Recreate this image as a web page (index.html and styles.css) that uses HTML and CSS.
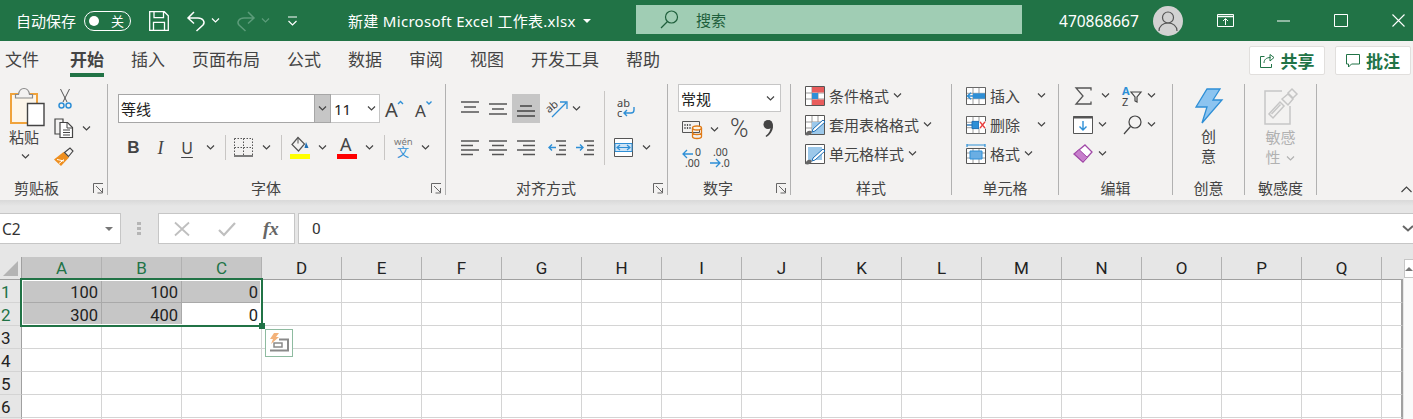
FILE: index.html
```html
<!DOCTYPE html>
<html lang="zh-CN">
<head>
  <meta charset="UTF-8" />
  <title>新建 Microsoft Excel 工作表.xlsx - Excel</title>
  <link rel="stylesheet" href="styles.css">
</head>
<body>

  <svg class="defs" aria-hidden="true">
    <symbol id="chev" viewBox="0 0 9 5"><path d="M1 .5 4.500 4 8 .5" fill="none" stroke="#444" stroke-width="1.200"/></symbol>
    <symbol id="chev-w" viewBox="0 0 9 5"><path d="M1 .5 4.500 4 8 .5" fill="none" stroke="#fff" stroke-width="1.200"/></symbol>
    <symbol id="chev-f" viewBox="0 0 9 5"><path d="M1 .5 4.500 4 8 .5" fill="none" stroke="#5c9c7a" stroke-width="1.200"/></symbol>
    <symbol id="chev-g" viewBox="0 0 9 5"><path d="M1 .5 4.500 4 8 .5" fill="none" stroke="#b1b1b1" stroke-width="1.200"/></symbol>
    <symbol id="launch" viewBox="0 0 11 11"><path d="M.5 10V.5H10M3 3l6 6M9.500 5v5h-5" fill="none" stroke="#666"/></symbol>
    <symbol id="lines-top" viewBox="0 0 18 17"><path d="M0 2h18M3 7h12M0 12h18" stroke="#555" stroke-width="1.400"/></symbol>
    <symbol id="lines-mid" viewBox="0 0 18 17"><path d="M0 4h18M3 9h12M0 14h18" stroke="#555" stroke-width="1.400"/></symbol>
    <symbol id="lines-bot" viewBox="0 0 18 17"><path d="M3 6h12M0 11h18M0 16h18" stroke="#444" stroke-width="1.400"/></symbol>
    <symbol id="grid20" viewBox="0 0 20 20"><path d="M.5.500h19v19H.5z" fill="#fff" stroke="#555"/><path d="M7 1v18M13 1v18M1 7h18M1 13h18" stroke="#999"/></symbol>
  </svg>

  <header class="titlebar">
    <span class="autosave">自动保存</span>
    <span class="toggle"><i class="toggle-dot"></i><span>关</span></span>
    <svg class="ic ml-18" width="20" height="20" viewBox="0 0 20 20" fill="none" stroke="#fff" stroke-width="1.300"><path d="M.7.7h14.600l4 4v14.600H.7zM5 .7v6h9.500v-6M4.500 19.300v-8h11v8"/></svg>
    <svg class="ic ml-17" width="20" height="22" viewBox="0 0 20 22" fill="none" stroke="#fff" stroke-width="1.500"><path d="M8 2 2 8l6 5.500M2 8h10c5 0 7.500 4 5 7l-6.500 6"/></svg>
    <svg class="chev ml-5"><use href="#chev-w"/></svg>
    <svg class="ic ml-16" width="20" height="22" viewBox="0 0 20 22" fill="none" stroke="#5c9c7a" stroke-width="1.500"><path d="M12 2l6 6-6 5.500M18 8H8c-5 0-7.500 4-5 7l6.500 6"/></svg>
    <svg class="chev ml-5"><use href="#chev-f"/></svg>
    <svg class="ic ml-17" width="11" height="10" viewBox="0 0 11 10" fill="none" stroke="#fff" stroke-width="1.200"><path d="M1 1h9M1.500 5 5.500 9l4-4"/></svg>
    <span class="doc-name">新建 Microsoft Excel 工作表.xlsx</span>
    <i class="doc-caret"></i>
    <div class="search">
      <svg class="ic" width="19" height="19" viewBox="0 0 19 19" fill="none" stroke="#1f5f3c" stroke-width="1.200"><circle cx="11.500" cy="7" r="6"/><path d="M7.500 11.500 1 18"/></svg>
      <span>搜索</span>
    </div>
    <span class="account">470868667</span>
    <span class="avatar">
      <svg width="20" height="22" viewBox="0 0 20 22" fill="none" stroke="#555" stroke-width="1.200"><circle cx="10" cy="7.500" r="5.500"/><path d="M1 21c0-5 4-8 9-8s9 3 9 8"/></svg>
    </span>
    <svg class="ic ml-34" width="17" height="13" viewBox="0 0 17 13" fill="none" stroke="#fff"><path d="M.5.500h16v12H.5z"/><path d="M.5 2.500h16" stroke-width="1.500"/><path d="M8.500 11V5M6 7l2.500-2.500L11 7"/></svg>
    <svg class="ic ml-43" width="13" height="2" viewBox="0 0 13 2"><path d="M0 1h13" stroke="#fff"/></svg>
    <svg class="ic ml-44" width="14" height="13" viewBox="0 0 14 13"><path d="M.5.500h13v12H.5z" fill="none" stroke="#fff"/></svg>
    <svg class="ic ml-44" width="13" height="13" viewBox="0 0 13 13"><path d="M.5.500l12 12M12.500.500l-12 12" stroke="#fff" stroke-width="1.100"/></svg>
  </header>

  <nav class="tabs">
    <span class="tab">文件</span>
    <span class="tab tab-active">开始</span>
    <span class="tab">插入</span>
    <span class="tab">页面布局</span>
    <span class="tab">公式</span>
    <span class="tab">数据</span>
    <span class="tab">审阅</span>
    <span class="tab">视图</span>
    <span class="tab">开发工具</span>
    <span class="tab">帮助</span>
    <button class="top-btn top-btn-first">
      <svg width="15" height="15" viewBox="0 0 15 15" fill="none" stroke="#217346"><path d="M4.500 3.500H.5v11h11V11M4 10c0-3.500 2.500-5.500 6.500-5.500M10 1.500l4 3-4 3.500z"/></svg>
      共享
    </button>
    <button class="top-btn">
      <svg width="14" height="14" viewBox="0 0 14 14" fill="none" stroke="#217346"><path d="M.5.500h13v9.500H5.500l-3 3v-3h-2z"/></svg>
      批注
    </button>
  </nav>

  <section class="ribbon">

    <div class="group g-clip">
      <div class="group-body">
        <div class="paste">
          <svg class="ic" width="36" height="39" viewBox="0 0 36 39">
            <path d="M2 7h26v29H2z" fill="#fdf6ea" stroke="#f0a33c" stroke-width="2"/>
            <path d="M6.500 11V7.500h3C10 4 11 1.500 15 1.500S20 4 20.500 7.500h3V11z" fill="#f3f2f1" stroke="#8a8a8a" stroke-width="1.200"/>
            <path d="M18.500 16.500h16.500v22H18.500z" fill="#fff" stroke="#444" stroke-width="1.400"/>
          </svg>
          <span class="paste-label">粘贴</span>
          <svg class="chev"><use href="#chev"/></svg>
        </div>
        <div class="clip-tools">
          <svg class="ic ml-4" width="14" height="21" viewBox="0 0 14 21" fill="none"><path d="M2.500 1 9 14M11.500 1 5 14" stroke="#555"/><circle cx="3.500" cy="17.500" r="2.500" stroke="#2e8fd6" stroke-width="1.500"/><circle cx="10.500" cy="17.500" r="2.500" stroke="#2e8fd6" stroke-width="1.500"/></svg>
          <div class="tool-row">
            <svg class="ic" width="20" height="20" viewBox="0 0 20 20" fill="none" stroke="#444" stroke-width="1.200"><path d="M7 16H1V1h8v3"/><path d="M6 4.500h7.500l5 5v10H6z" fill="#fff"/><path d="M13 5v5h5M9 12h7M9 14.500h7M9 17h7" stroke-width="1"/></svg>
            <svg class="chev ml-8"><use href="#chev"/></svg>
          </div>
          <svg class="ic" width="20" height="20" viewBox="0 0 20 20"><path d="M9.500 5 15 10.500 7 19 0 12.500z" fill="#ee8f1f"/><path d="M3 12.500l7 1.500M5 16.500l5-4" stroke="#fff"/><path d="M10.500 5.500 16 1l3 3-4.500 5.500z" fill="#f3f2f1" stroke="#444" stroke-width="1.100"/></svg>
        </div>
      </div>
      <div class="group-label">
        <span class="label-text">剪贴板</span>
        <svg class="launch"><use href="#launch"/></svg>
      </div>
    </div>

    <div class="group g-font">
      <div class="group-body font-body">
        <div class="font-row1">
          <div class="combo font-name">
            <span>等线</span>
            <span class="combo-btn"><svg class="chev"><use href="#chev"/></svg></span>
          </div>
          <div class="combo font-size">
            <span>11</span>
            <svg class="chev"><use href="#chev"/></svg>
          </div>
          <svg class="ic ml-5" width="20" height="20" viewBox="0 0 20 20"><text class="svg-a" x="0" y="18" font-size="20">A</text><path d="M13 5l2.500-2.500L18 5" fill="none" stroke="#2e8fd6" stroke-width="1.400"/></svg>
          <svg class="ic ml-10" width="18" height="20" viewBox="0 0 18 20"><text class="svg-a" x="0" y="18" font-size="17">A</text><path d="M11.500 2.500 14 5l2.500-2.500" fill="none" stroke="#2e8fd6" stroke-width="1.400"/></svg>
        </div>
        <div class="font-row2">
          <span class="fmt fmt-b">B</span>
          <span class="fmt fmt-i">I</span>
          <span class="fmt fmt-u">U</span>
          <svg class="chev ml-6"><use href="#chev"/></svg>
          <i class="mini-sep ml-10"></i>
          <svg class="ic ml-8" width="19" height="19" viewBox="0 0 19 19" fill="none" stroke="#555"><path d="M.5.500h18M.5 9.500h18M9.500.500v17M.5.500v17M18.500.500v17" stroke-dasharray="1.500 1.500"/><path d="M0 18h19" stroke-width="1.500"/></svg>
          <svg class="chev ml-9"><use href="#chev"/></svg>
          <i class="mini-sep ml-10"></i>
          <svg class="ic ml-8" width="20" height="23" viewBox="0 0 20 23"><path d="M8 1.500 2 8.500 8.500 15l6-7z" fill="none" stroke="#555" stroke-width="1.200"/><path d="M8 1.500v6" stroke="#555"/><path d="M16 6l2.500 6h-4z" fill="#1f6fb5"/><path d="M0 18h20v5H0z" fill="#ff0"/></svg>
          <svg class="chev ml-8"><use href="#chev"/></svg>
          <svg class="ic ml-10" width="20" height="23" viewBox="0 0 20 23"><text class="svg-a" x="3" y="15" font-size="18">A</text><path d="M0 18h20v5H0z" fill="#f00"/></svg>
          <svg class="chev ml-8"><use href="#chev"/></svg>
          <i class="mini-sep ml-10"></i>
          <svg class="ic ml-9" width="18" height="22" viewBox="0 0 18 22"><text class="svg-wen" x="0" y="8" font-size="9.500">wén</text><text class="svg-blue" x="3" y="20" font-size="12">文</text></svg>
          <svg class="chev ml-9"><use href="#chev"/></svg>
        </div>
      </div>
      <div class="group-label">
        <span class="label-text">字体</span>
        <svg class="launch"><use href="#launch"/></svg>
      </div>
    </div>

    <div class="group g-align">
      <div class="group-body align-body">
        <div class="align-left">
          <div class="align-row">
            <svg class="ic-18"><use href="#lines-top"/></svg>
            <svg class="ic-18 ml-10"><use href="#lines-mid"/></svg>
            <span class="pressed"><svg class="ic-18"><use href="#lines-bot"/></svg></span>
            <svg class="ic ml-7" width="21" height="20" viewBox="0 0 21 20" fill="none"><text class="svg-a" x="0" y="11" font-size="11" transform="rotate(-40 6 10)">ab</text><path d="M5 18 19 4M13 3h7v7" stroke="#2e8fd6" stroke-width="1.300"/></svg>
            <svg class="chev ml-4"><use href="#chev"/></svg>
          </div>
          <div class="align-row align-row2">
            <svg class="ic" width="18" height="17" viewBox="0 0 18 17" stroke="#555" stroke-width="1.400"><path d="M0 2h18M0 6.500h12M0 11h18M0 15.500h12"/></svg>
            <svg class="ic ml-10" width="18" height="17" viewBox="0 0 18 17" stroke="#555" stroke-width="1.400"><path d="M0 2h18M3 6.500h12M0 11h18M3 15.500h12"/></svg>
            <svg class="ic ml-10" width="18" height="17" viewBox="0 0 18 17" stroke="#555" stroke-width="1.400"><path d="M0 2h18M6 6.500h12M0 11h18M6 15.500h12"/></svg>
            <svg class="ic ml-13" width="18" height="17" viewBox="0 0 18 17" fill="none"><path d="M8 2h10M11 6.500h7M11 11h7M8 15.500h10" stroke="#555" stroke-width="1.400"/><path d="M8 8.500H1M4 5.500l-3 3 3 3" stroke="#2e8fd6" stroke-width="1.400"/></svg>
            <svg class="ic ml-10" width="18" height="17" viewBox="0 0 18 17" fill="none"><path d="M8 2h10M11 6.500h7M11 11h7M8 15.500h10" stroke="#555" stroke-width="1.400"/><path d="M0 8.500h7M4 5.500l3 3-3 3" stroke="#2e8fd6" stroke-width="1.400"/></svg>
          </div>
        </div>
        <i class="tall-sep"></i>
        <div class="align-right">
          <svg class="ic wrap-ic" width="19" height="21" viewBox="0 0 19 21" fill="none"><text class="svg-a" x="0" y="9" font-size="11">ab</text><text class="svg-a" x="0" y="19" font-size="11">c</text><path d="M17 9v3c0 2-1 3-3 3H7M10 12l-3 3 3 3" stroke="#2e8fd6" stroke-width="1.400"/></svg>
          <div class="tool-row merge-row">
            <svg class="ic" width="19" height="19" viewBox="0 0 19 19"><path d="M.5.500h18v18H.5z" fill="#fff" stroke="#555"/><path d="M1 5.500h17v8H1z" fill="#cfe4f5" stroke="#2e8fd6"/><path d="M3 9.500h13M6 7 3 9.500 6 12M13 7l3 2.500-3 2.500" fill="none" stroke="#2e8fd6" stroke-width="1.200"/></svg>
            <svg class="chev ml-9"><use href="#chev"/></svg>
          </div>
        </div>
      </div>
      <div class="group-label">
        <span class="label-text">对齐方式</span>
        <svg class="launch"><use href="#launch"/></svg>
      </div>
    </div>

    <div class="group g-num">
      <div class="group-body num-body">
        <div class="combo num-format">
          <span>常规</span>
          <svg class="chev"><use href="#chev"/></svg>
        </div>
        <div class="num-row">
          <svg class="ic ml-4" width="20" height="19" viewBox="0 0 20 19" fill="none"><path d="M.5 1.500h17v11H.5z" stroke="#555"/><path d="M3 4v6M5.500 4v6M8 4v6" stroke="#555" stroke-width="1.200" stroke-dasharray="2 1"/><ellipse cx="15" cy="8" rx="4.500" ry="2" fill="#fdf3e2" stroke="#e07b18" stroke-width="1.300"/><path d="M10.500 8v8.500c0 1 2 2 4.500 2s4.500-1 4.500-2V8M10.500 12.500c0 1 2 2 4.500 2s4.500-1 4.500-2" fill="none" stroke="#e07b18" stroke-width="1.300"/></svg>
          <svg class="chev ml-8"><use href="#chev"/></svg>
          <span class="percent">%</span>
          <svg class="ic ml-13" width="11" height="20" viewBox="0 0 11 20"><circle cx="5" cy="5.500" r="4.500" fill="#444"/><path d="M6 1c6 2 5.500 12-2.500 17l-1-1c4-3 5-6 5-9z" fill="#444"/></svg>
        </div>
        <div class="num-row num-row3">
          <svg class="ic ml-4" width="20" height="20" viewBox="0 0 20 20" fill="none"><path d="M11 6H1M5 2 1 6l4 4" stroke="#2e8fd6" stroke-width="1.300"/><text class="svg-a" x="13" y="8" font-size="10.500">0</text><text class="svg-a" x="3" y="19" font-size="10.500">.00</text></svg>
          <svg class="ic ml-7" width="20" height="20" viewBox="0 0 20 20" fill="none"><text class="svg-a" x="4" y="8" font-size="10.500">.00</text><path d="M1 15h10M7 11l4 4-4 4" stroke="#2e8fd6" stroke-width="1.300"/><text class="svg-a" x="12" y="19" font-size="10.500">.0</text></svg>
        </div>
      </div>
      <div class="group-label">
        <span class="label-text">数字</span>
        <svg class="launch"><use href="#launch"/></svg>
      </div>
    </div>

    <div class="group g-style">
      <div class="group-body list-body">
        <div class="list-row">
          <svg class="ic" width="20" height="20" viewBox="0 0 20 20"><use href="#grid20"/><path d="M7 1h12v5.500H7zM7 13.500h12V19H7z" fill="#e85c5c"/><path d="M7 7h6v6H7z" fill="#2e8fd6"/></svg>
          <span>条件格式</span><svg class="chev"><use href="#chev"/></svg>
        </div>
        <div class="list-row">
          <svg class="ic" width="20" height="20" viewBox="0 0 20 20"><use href="#grid20"/><path d="M7 7h12v12H7z" fill="#9cc8ea"/><path d="M18 5 8 14l-1 3 3-1 10-9z" fill="#fff" stroke="#1f6fb5"/><path d="M0 20c1-3 3-5 6-4l1 1c-1 3-4 4-7 3z" fill="#666"/></svg>
          <span>套用表格格式</span><svg class="chev"><use href="#chev"/></svg>
        </div>
        <div class="list-row">
          <svg class="ic" width="20" height="20" viewBox="0 0 20 20"><path d="M.5.500h19v19H.5z" fill="#fff" stroke="#555"/><path d="M3 3h14v13H3z" fill="#9cc8ea"/><path d="M18 5 8 14l-1 3 3-1 10-9z" fill="#fff" stroke="#1f6fb5"/><path d="M0 20c1-3 3-5 6-4l1 1c-1 3-4 4-7 3z" fill="#666"/></svg>
          <span>单元格样式</span><svg class="chev"><use href="#chev"/></svg>
        </div>
      </div>
      <div class="group-label"><span class="label-text">样式</span></div>
    </div>

    <div class="group g-cells">
      <div class="group-body list-body">
        <div class="list-row">
          <svg class="ic" width="20" height="18" viewBox="0 0 20 20" preserveAspectRatio="none"><use href="#grid20"/><path d="M7 7h12v6H7z" fill="#2e8fd6"/><path d="M11 10H2M5 6.500 1.500 10 5 13.500" fill="none" stroke="#2e8fd6" stroke-width="1.500"/></svg>
          <span>插入</span><svg class="chev cell-chev"><use href="#chev"/></svg>
        </div>
        <div class="list-row">
          <svg class="ic" width="20" height="18" viewBox="0 0 20 20" preserveAspectRatio="none"><use href="#grid20"/><path d="M6 6h7v8H6z" fill="#2e8fd6" stroke="#1f6fb5"/><path d="M1 10h5" stroke="#1f6fb5" stroke-width="1.500"/><path d="M13 6h7v8h-7z" fill="#fff"/><path d="M14 6.500l5 7M19 6.500l-5 7" stroke="#e83c3c" stroke-width="1.500"/></svg>
          <span>删除</span><svg class="chev cell-chev"><use href="#chev"/></svg>
        </div>
        <div class="list-row">
          <svg class="ic" width="20" height="20" viewBox="0 0 20 20"><path d="M1 1h18M1 0v3M19 0v3" stroke="#2e8fd6" stroke-width="1.200"/><path d="M.5 4.500h19v15H.5z" fill="#fff" stroke="#555"/><path d="M7 5v14M13 5v14M1 9h18M1 14h18" stroke="#999"/><path d="M4 7h12v8H4z" fill="#6aaee3" stroke="#2e8fd6"/></svg>
          <span>格式</span><svg class="chev"><use href="#chev"/></svg>
        </div>
      </div>
      <div class="group-label"><span class="label-text">单元格</span></div>
    </div>

    <div class="group g-edit">
      <div class="group-body list-body">
        <div class="list-row edit-row">
          <svg class="ic" width="20" height="18" viewBox="0 0 20 18" fill="none"><path d="M18 3.500V1H3l7 8-7 8h15v-2.500" stroke="#555" stroke-width="1.300"/></svg>
          <svg class="chev ml-8"><use href="#chev"/></svg>
          <svg class="ic ml-12" width="20" height="22" viewBox="0 0 20 22"><text class="svg-sort-a" x="0" y="10" font-size="11">A</text><text class="svg-a" x="0" y="21" font-size="11">Z</text><path d="M9 7h10l-4 5v5l-2-1v-4z" fill="none" stroke="#444" stroke-width="1.200"/></svg>
          <svg class="chev ml-5"><use href="#chev"/></svg>
        </div>
        <div class="list-row edit-row">
          <svg class="ic" width="20" height="18" viewBox="0 0 20 18"><path d="M.5.500h19v17H.5z" fill="#fff" stroke="#555"/><path d="M0 1.500h20" stroke="#555" stroke-width="2"/><path d="M10 5v9M6.500 10.500l3.500 3.500 3.500-3.500" fill="none" stroke="#2e8fd6" stroke-width="1.400"/></svg>
          <svg class="chev ml-5"><use href="#chev"/></svg>
          <svg class="ic ml-16" width="19" height="20" viewBox="0 0 19 20" fill="none" stroke="#444" stroke-width="1.200"><circle cx="12" cy="7" r="6"/><path d="M7.500 11.500 1 19"/></svg>
          <svg class="chev ml-5"><use href="#chev"/></svg>
        </div>
        <div class="list-row edit-row">
          <svg class="ic" width="20" height="20" viewBox="0 0 20 20"><path d="M12 1 19 8 10 18 1 10z" fill="#fff" stroke="#a14aa8" stroke-width="1.300"/><path d="M6 5.500l8.500 8L10 18l-8.500-8z" fill="#c77fcc" stroke="#a14aa8"/></svg>
          <svg class="chev ml-5"><use href="#chev"/></svg>
        </div>
      </div>
      <div class="group-label"><span class="label-text">编辑</span></div>
    </div>

    <div class="group g-ideas">
      <div class="group-body big-body">
        <svg class="ic" width="28" height="36" viewBox="0 0 28 36"><path d="M12 1h13l-7 11h9L7 35l5-16H1z" fill="#8cc4f0" stroke="#2e8fd6" stroke-width="1.300"/></svg>
        <span class="big-text">创<br>意</span>
      </div>
      <div class="group-label"><span class="label-text">创意</span></div>
    </div>

    <div class="group g-sens">
      <div class="group-body big-body">
        <svg class="ic" width="34" height="38" viewBox="0 0 34 38" fill="none" stroke="#c6c6c6" stroke-width="1.500"><path d="M26 18v18H1V3h17"/><path d="M5 26 16 14l4 4-11 12z"/><path d="M7.500 26 16.500 16.500"/><path d="M18 11l6-5 5 5-5 6z" fill="#f3f2f1"/><path d="M24 5l4-4 5 5-4 4z"/></svg>
        <span class="big-text sens-text">敏感<br>性<svg class="chev"><use href="#chev-g"/></svg></span>
      </div>
      <div class="group-label"><span class="label-text">敏感度</span></div>
    </div>

    <svg class="collapse" width="11" height="7" viewBox="0 0 11 7"><path d="M.5 6 5.500 1l5 5" fill="none" stroke="#444" stroke-width="1.200"/></svg>
  </section>

  <section class="formula-band">
    <div class="name-box">
      <span>C2</span>
      <i class="name-caret"></i>
    </div>
    <svg class="grip" width="4" height="13" viewBox="0 0 4 13"><path d="M0 0h4v3H0zM0 5h4v3H0zM0 10h4v3H0z" fill="#b5b5b5"/></svg>
    <div class="fx-btns">
      <svg class="ic" width="16" height="14" viewBox="0 0 16 14"><path d="M1 .5l14 13M15 .5l-14 13" stroke="#bfbfbf" stroke-width="1.800"/></svg>
      <svg class="ic" width="18" height="14" viewBox="0 0 18 14"><path d="M1 8l5 5L17 1" fill="none" stroke="#bfbfbf" stroke-width="2.200"/></svg>
      <span class="fx">fx</span>
    </div>
    <div class="formula-input">
      <span>0</span>
      <svg class="formula-chev" width="12" height="7" viewBox="0 0 12 7"><path d="M1 1l5 4.500L11 1" fill="none" stroke="#666" stroke-width="2"/></svg>
    </div>
  </section>

  <section class="sheet">
    <div class="grid">
      <div class="corner"><i></i></div>
      <div class="col sel">A</div><div class="col sel">B</div><div class="col sel">C</div>
      <div class="col">D</div><div class="col">E</div><div class="col">F</div><div class="col">G</div>
      <div class="col">H</div><div class="col">I</div><div class="col">J</div><div class="col">K</div>
      <div class="col">L</div><div class="col">M</div><div class="col">N</div><div class="col">O</div>
      <div class="col">P</div><div class="col">Q</div><div class="col col-end"></div>

      <div class="row row-sel">1</div>
      <div class="c filled">100</div><div class="c filled">100</div><div class="c filled">0</div>
      <div class="c"></div><div class="c"></div><div class="c"></div><div class="c"></div><div class="c"></div><div class="c"></div><div class="c"></div><div class="c"></div><div class="c"></div><div class="c"></div><div class="c"></div><div class="c"></div><div class="c"></div><div class="c"></div><div class="c c-end"></div>

      <div class="row row-sel">2</div>
      <div class="c filled">300</div><div class="c filled">400</div><div class="c">0</div>
      <div class="c"></div><div class="c"></div><div class="c"></div><div class="c"></div><div class="c"></div><div class="c"></div><div class="c"></div><div class="c"></div><div class="c"></div><div class="c"></div><div class="c"></div><div class="c"></div><div class="c"></div><div class="c"></div><div class="c c-end"></div>

      <div class="row">3</div>
      <div class="c"></div><div class="c"></div><div class="c"></div><div class="c"></div><div class="c"></div><div class="c"></div><div class="c"></div><div class="c"></div><div class="c"></div><div class="c"></div><div class="c"></div><div class="c"></div><div class="c"></div><div class="c"></div><div class="c"></div><div class="c"></div><div class="c"></div><div class="c c-end"></div>

      <div class="row">4</div>
      <div class="c"></div><div class="c"></div><div class="c"></div><div class="c"></div><div class="c"></div><div class="c"></div><div class="c"></div><div class="c"></div><div class="c"></div><div class="c"></div><div class="c"></div><div class="c"></div><div class="c"></div><div class="c"></div><div class="c"></div><div class="c"></div><div class="c"></div><div class="c c-end"></div>

      <div class="row">5</div>
      <div class="c"></div><div class="c"></div><div class="c"></div><div class="c"></div><div class="c"></div><div class="c"></div><div class="c"></div><div class="c"></div><div class="c"></div><div class="c"></div><div class="c"></div><div class="c"></div><div class="c"></div><div class="c"></div><div class="c"></div><div class="c"></div><div class="c"></div><div class="c c-end"></div>

      <div class="row">6</div>
      <div class="c"></div><div class="c"></div><div class="c"></div><div class="c"></div><div class="c"></div><div class="c"></div><div class="c"></div><div class="c"></div><div class="c"></div><div class="c"></div><div class="c"></div><div class="c"></div><div class="c"></div><div class="c"></div><div class="c"></div><div class="c"></div><div class="c"></div><div class="c c-end"></div>

      <div class="row"></div>
      <div class="c"></div><div class="c"></div><div class="c"></div><div class="c"></div><div class="c"></div><div class="c"></div><div class="c"></div><div class="c"></div><div class="c"></div><div class="c"></div><div class="c"></div><div class="c"></div><div class="c"></div><div class="c"></div><div class="c"></div><div class="c"></div><div class="c"></div><div class="c c-end"></div>

      <div class="selection"><i class="handle"></i></div>
      <div class="quick">
        <svg width="20" height="20" viewBox="0 0 20 20"><path d="M1 17.500h18V6.500h-9" fill="none" stroke="#8a8a8a" stroke-width="2"/><path d="M5 14V10h8v4z" fill="none" stroke="#8a8a8a" stroke-width="1.500"/><path d="M5 0h5L7 4h3L2 11l2-5H1z" fill="#f3b27a"/></svg>
      </div>
    </div>
    <div class="scroll">
      <div class="scroll-up"><i></i></div>
    </div>
  </section>

</body>
</html>
```

FILE: styles.css
```css
* {
  box-sizing: border-box;
}
html, body {
  margin: 0;
  height: 419px;
  overflow: hidden;
}
body {
  width: 1413px;
  font-family: "Noto Sans", "Noto Sans CJK SC", sans-serif;
  font-size: 15px;
  color: #444;
  background: #e6e6e6;
}
.defs {
  position: absolute;
  width: 0;
  height: 0;
}
.ic, .ic-18, .chev, .launch {
  display: block;
  flex: none;
  overflow: visible;
}
.ic-18 {
  width: 18px;
  height: 17px;
}
.chev {
  width: 9px;
  height: 5px;
}
.ml-4 { margin-left: 4px; }
.ml-5 { margin-left: 5px; }
.ml-6 { margin-left: 6px; }
.ml-7 { margin-left: 7px; }
.ml-8 { margin-left: 8px; }
.ml-9 { margin-left: 9px; }
.ml-10 { margin-left: 10px; }
.ml-12 { margin-left: 12px; }
.ml-13 { margin-left: 13px; }
.ml-16 { margin-left: 16px; }
.ml-17 { margin-left: 17px; }
.ml-18 { margin-left: 18px; }
.ml-34 { margin-left: 34px; }
.ml-43 { margin-left: 43px; }
.ml-44 { margin-left: 44px; }

/* title bar */
.titlebar {
  display: flex;
  align-items: center;
  height: 41px;
  padding-left: 16px;
  background: #217346;
  color: #fff;
}
.autosave {
  line-height: 20px;
}
.toggle {
  display: flex;
  align-items: center;
  justify-content: space-between;
  width: 47px;
  height: 20px;
  margin-left: 8px;
  padding: 0 6px 0 4px;
  border: 1px solid #fff;
  border-radius: 10px;
  font-size: 13px;
}
.toggle-dot {
  width: 10px;
  height: 10px;
  border-radius: 50%;
  background: #fff;
}
.doc-name {
  width: 226px;
  margin-left: 50px;
  letter-spacing: .3px;
  white-space: nowrap;
}
.doc-caret {
  margin-left: 9px;
  border: 4px solid transparent;
  border-top: 4px solid #fff;
  border-bottom: 0;
}
.search {
  display: flex;
  align-items: center;
  gap: 17px;
  width: 386px;
  height: 29px;
  margin: -2px 0 0 45px;
  padding-left: 24px;
  background: #a0cdb4;
  color: #1f5f3c;
}
.account {
  margin-left: 37px;
  width: 81px;
  font-size: 15.500px;
}
.avatar {
  display: flex;
  align-items: flex-end;
  justify-content: center;
  width: 30px;
  height: 30px;
  margin-left: 13px;
  padding-bottom: 4px;
  border-radius: 50%;
  background: #d2d2d2;
}

/* tabs */
.tabs {
  display: flex;
  align-items: flex-start;
  gap: 27px;
  height: 43px;
  padding-left: 5px;
  background: #f3f2f1;
}
.tab {
  height: 36px;
  padding-top: 5px;
  border-bottom: 4px solid transparent;
  font-size: 17px;
  line-height: 27px;
  white-space: nowrap;
}
.tab-active {
  margin-left: 4px;
  border-bottom-color: #217346;
  font-weight: 700;
}
.top-btn {
  display: flex;
  align-items: center;
  justify-content: center;
  gap: 6px;
  width: 76px;
  height: 29px;
  margin: 5px 0 0 -17px;
  padding: 0;
  border: 1px solid #e1dfdd;
  border-radius: 2px;
  background: #fff;
  color: #217346;
  font-family: inherit;
  font-size: 17px;
  font-weight: 700;
}
.top-btn-first {
  margin-left: auto;
}
.top-btn:last-child {
  margin-right: 2px;
}

/* ribbon */
.ribbon {
  display: flex;
  height: 116px;
  padding-bottom: 5px;
  background: #f3f2f1;
}
.group {
  display: flex;
  flex: none;
  flex-direction: column;
  border-right: 1px solid #b1b1b1;
}
.g-clip { width: 108px; }
.g-font { width: 338px; }
.g-align { width: 222px; }
.g-num { width: 123px; }
.g-style { width: 161px; }
.g-cells { width: 107px; }
.g-edit { width: 114px; }
.g-ideas { width: 72px; }
.g-sens { width: 72px; }
.group-body {
  flex: 1;
  min-height: 0;
}
.group-label {
  display: flex;
  align-items: center;
  justify-content: center;
  height: 20px;
  margin-bottom: -3px;
  line-height: 20px;
  white-space: nowrap;
}
.launch {
  width: 11px;
  height: 11px;
  margin-right: 3px;
}
.g-clip .label-text { margin-right: auto; margin-left: 14px; }
.g-font .label-text { margin-right: auto; margin-left: 143px; }
.g-align .label-text { margin-right: auto; margin-left: 70px; }
.g-num .label-text { margin-right: auto; margin-left: 35px; }

.tool-row {
  display: flex;
  align-items: center;
}

/* clipboard */
.g-clip .group-body {
  display: flex;
  padding-left: 9px;
}
.paste {
  display: flex;
  flex-direction: column;
  align-items: center;
  width: 36px;
  padding-top: 3px;
}
.paste-label {
  width: 32px;
  margin: 1px 0 0 -4px;
  line-height: 20px;
  white-space: nowrap;
}
.paste .chev {
  margin: 7px 0 0 -4px;
}
.clip-tools {
  display: flex;
  flex-direction: column;
  gap: 9px;
  margin-left: 9px;
  padding-top: 4px;
}

/* font */
.font-body {
  padding: 10px 0 0 10px;
}
.font-row1 {
  display: flex;
  align-items: center;
  height: 29px;
}
.combo {
  display: flex;
  align-items: center;
  background: #fff;
  color: #222;
}
.font-name {
  width: 213px;
  height: 29px;
  padding-left: 2px;
  border: 1px solid #a6a6a6;
}
.combo-btn {
  display: flex;
  align-items: center;
  justify-content: center;
  width: 16px;
  height: 27px;
  margin-left: auto;
  border-left: 1px solid #a6a6a6;
  background: #c6c6c6;
}
.font-size {
  justify-content: space-between;
  width: 49px;
  height: 29px;
  padding: 0 3px;
  border: 1px solid #c6c6c6;
  border-left: 0;
}
.font-row2 {
  display: flex;
  align-items: center;
  height: 25px;
  margin: 12px 0 0 2px;
}
.fmt {
  width: 27px;
  color: #444;
  font-size: 16px;
  line-height: 20px;
  text-align: center;
}
.fmt-b {
  font-family: "Liberation Sans", sans-serif;
  font-weight: 700;
  font-size: 17px;
}
.fmt-i {
  font-family: "Liberation Serif", serif;
  font-style: italic;
  font-size: 18px;
}
.fmt-u {
  width: 26px;
  text-decoration: underline;
  text-underline-offset: 3px;
}
.mini-sep {
  width: 1px;
  height: 25px;
  background: #c8c6c4;
}
.svg-a {
  font-family: "Noto Sans", sans-serif;
  fill: #444;
}
.svg-wen {
  font-family: "Noto Sans", sans-serif;
  fill: #777;
}
.svg-blue {
  font-family: "Noto Sans CJK SC", sans-serif;
  fill: #2e8fd6;
}
.svg-sort-a {
  font-family: "Noto Sans", sans-serif;
  font-weight: 700;
  fill: #2e8fd6;
}

/* alignment */
.align-body {
  display: flex;
}
.align-left {
  width: 158px;
  padding: 10px 0 0 15px;
}
.align-row {
  display: flex;
  align-items: center;
  height: 29px;
}
.align-row2 {
  height: 25px;
  margin-top: 12px;
}
.pressed {
  display: flex;
  align-items: center;
  justify-content: center;
  width: 28px;
  height: 29px;
  margin-left: 5px;
  background: #c6c6c6;
}
.tall-sep {
  width: 1px;
  height: 74px;
  margin-top: 7px;
  background: #c8c6c4;
}
.align-right {
  padding: 14px 0 0 9px;
}
.wrap-ic {
  margin-left: 3px;
}
.merge-row {
  margin-top: 19px;
}

/* number */
.num-body {
  padding-left: 10px;
}
.num-format {
  justify-content: space-between;
  width: 103px;
  height: 28px;
  padding: 0 5px 0 2px;
  border: 1px solid #c6c6c6;
}
.num-row {
  display: flex;
  align-items: center;
  height: 20px;
  margin-top: 7px;
}
.num-row3 {
  margin-top: 9px;
}
.percent {
  width: 20px;
  margin-left: 11px;
  font-family: Roboto, sans-serif;
  font-weight: 300;
  font-size: 25px;
  line-height: 20px;
}

/* styles, cells, editing */
.list-body {
  margin-top: -3px;
}
.list-row {
  display: flex;
  align-items: center;
  gap: 4px;
  height: 29px;
  padding-left: 14px;
  white-space: nowrap;
}
.cell-chev {
  margin-left: 13px;
}
.edit-row {
  gap: 0;
}

/* ideas, sensitivity */
.big-body {
  display: flex;
  flex-direction: column;
  align-items: center;
  padding-top: 4px;
}
.big-text {
  margin-top: 2px;
  line-height: 20px;
  text-align: center;
}
.sens-text {
  width: 30px;
  margin-top: 1px;
  color: #b1b1b1;
  text-align: left;
}
.sens-text .chev {
  display: inline-block;
  margin-left: 5px;
  vertical-align: middle;
}
.collapse {
  align-self: flex-end;
  margin: 0 1px 2px auto;
}

/* formula bar */
.formula-band {
  display: flex;
  align-items: flex-start;
  height: 57px;
  padding-top: 13px;
  background: linear-gradient(#d9d9d9, #e6e6e6 6px);
}
.name-box {
  display: flex;
  align-items: center;
  justify-content: space-between;
  width: 122px;
  height: 31px;
  margin-left: -1px;
  padding: 0 7px 0 2px;
  border: 1px solid #c6c6c6;
  background: #fff;
  color: #333;
  font-size: 15.500px;
}
.name-caret {
  border: 4px solid transparent;
  border-top: 4px solid #777;
  border-bottom: 0;
}
.grip {
  margin: 9px 0 0 16px;
}
.fx-btns {
  display: flex;
  align-items: center;
  gap: 28px;
  width: 137px;
  height: 31px;
  margin-left: 17px;
  padding-left: 15px;
  border: 1px solid #c6c6c6;
  background: #fff;
}
.fx {
  margin-left: -1px;
  font-family: "Liberation Serif", serif;
  font-style: italic;
  font-weight: 700;
  font-size: 19px;
  color: #666;
}
.formula-input {
  display: flex;
  flex: 1;
  align-items: center;
  justify-content: space-between;
  height: 31px;
  margin-left: 3px;
  padding-left: 13px;
  border: 1px solid #c6c6c6;
  border-right: 0;
  background: #fff;
  font-family: Roboto, sans-serif;
  font-size: 15.500px;
  color: #333;
}
.formula-chev {
  margin-right: -1px;
}

/* sheet */
.sheet {
  display: flex;
  height: 162px;
  overflow: hidden;
  background: #e6e6e6;
}
.grid {
  position: relative;
  display: grid;
  grid-template-columns: 22px repeat(17, 80px) 21px;
  grid-auto-rows: 23px;
  flex: none;
  width: 1403px;
  font-family: Roboto, sans-serif;
  font-size: 16.500px;
  color: #222;
}
.corner {
  position: relative;
  border-right: 1px solid #a0a0a0;
  border-bottom: 1px solid #a0a0a0;
}
.corner i {
  position: absolute;
  right: 3px;
  bottom: 3px;
  border-left: 15px solid transparent;
  border-bottom: 15px solid #b4b4b4;
}
.col {
  display: flex;
  align-items: center;
  justify-content: center;
  border-right: 1px solid #b1b1b1;
  border-bottom: 1px solid #a0a0a0;
  font-size: 17px;
  line-height: 22px;
}
.col.sel {
  background: #c6c6c6;
  color: #217346;
}
.col-end {
  border-right: 0;
}
.row {
  padding-left: 1px;
  border-right: 1px solid #a0a0a0;
  border-bottom: 1px solid #d4d4d4;
  font-size: 17px;
  line-height: 24px;
}
.row-sel {
  color: #217346;
}
.c {
  padding-right: 3px;
  border-right: 1px solid #d4d4d4;
  border-bottom: 1px solid #d4d4d4;
  background: #fff;
  text-align: right;
  line-height: 25px;
}
.filled {
  border-color: #a9a9a9;
  background: #c6c6c6;
}
.c-end {
  border-right: 2px solid #a0a0a0;
}
.selection {
  position: absolute;
  left: 20px;
  top: 21px;
  width: 243px;
  height: 49px;
  border: 2px solid #217346;
  box-shadow: inset 0 0 0 1px #fff;
}
.handle {
  position: absolute;
  right: -4px;
  bottom: -4px;
  width: 6px;
  height: 6px;
  background: #217346;
}
.quick {
  position: absolute;
  left: 265px;
  top: 72px;
  display: flex;
  align-items: center;
  justify-content: center;
  width: 28px;
  height: 28px;
  border: 1px solid #8ebba0;
  background: #fff;
}
.scroll {
  flex: none;
  width: 9px;
  margin: 2px 0 0 1px;
  background: #fafafa;
}
.scroll-up {
  display: flex;
  align-items: center;
  justify-content: center;
  height: 19px;
  border: 1px solid #c6c6c6;
  border-right: 0;
  background: #fff;
}
.scroll-up i {
  border: 4px solid transparent;
  border-bottom: 4px solid #777;
  border-top: 0;
}
```
